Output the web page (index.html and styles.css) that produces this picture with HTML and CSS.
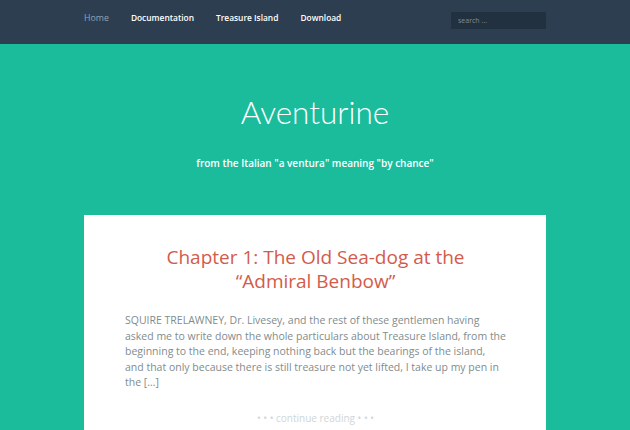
FILE: index.html
```html
<!DOCTYPE html>
<html>
<head>
<meta charset="utf-8">
<link rel="stylesheet" href="styles.css">
</head>
<body>
<header class="topbar">
  <div class="wrap topbar-inner">
    <nav class="menu">
      <a class="menu-item current" href="#">Home</a>
      <a class="menu-item" href="#">Documentation</a>
      <a class="menu-item" href="#">Treasure Island</a>
      <a class="menu-item" href="#">Download</a>
    </nav>
    <div class="search">search …</div>
  </div>
</header>
<section class="masthead">
  <h1 class="site-title">Aventurine</h1>
  <p class="site-desc">from the Italian "a ventura" meaning "by chance"</p>
</section>
<main class="wrap">
  <article class="card">
    <h2 class="post-title">Chapter 1: The Old Sea-dog at the<br>“Admiral Benbow”</h2>
    <p class="excerpt">SQUIRE TRELAWNEY, Dr. Livesey, and the rest of these gentlemen having asked me to write down the whole particulars about Treasure Island, from the beginning to the end, keeping nothing back but the bearings of the island,<br>and that only because there is still treasure not yet lifted, I take up my pen in<br>the […]</p>
    <p class="more">• • • continue reading • • •</p>
  </article>
</main>
</body>
</html>
```
FILE: styles.css
```css
html, body {
  margin: 0;
  padding: 0;
}
body {
  background: #1abc9c;
  font-family: "Open Sans", "Liberation Sans", sans-serif;
  overflow: hidden;
}
.wrap {
  width: 462px;
  margin: 0 auto;
}
.topbar {
  background: #2c3e50;
  height: 44px;
}
.topbar-inner {
  display: flex;
  justify-content: space-between;
  align-items: flex-start;
}
.menu {
  display: flex;
  gap: 22px;
  padding-top: 12px;
}
.menu-item {
  color: #ffffff;
  text-decoration: none;
  font-size: 8.4px;
  font-weight: 600;
  line-height: 12px;
}
.menu-item.current {
  color: #93a3b8;
  font-weight: 400;
  font-size: 8.8px;
}
.search {
  margin-top: 12px;
  width: 88px;
  height: 17px;
  padding-left: 7px;
  background: #223140;
  color: #7f8c99;
  font-size: 7px;
  line-height: 17px;
}
.masthead {
  text-align: center;
  color: #ffffff;
  padding-top: 48px;
  height: 171px;
  box-sizing: border-box;
}
.site-title {
  margin: 0;
  font-family: "Lato", sans-serif;
  font-weight: 300;
  font-size: 31.5px;
  line-height: 40px;
}
.site-desc {
  margin: 24px 0 0;
  font-size: 10px;
  line-height: 14px;
  font-weight: 600;
}
.card {
  background: #ffffff;
  padding: 30px 40px 10px 41px;
  text-align: center;
}
.post-title {
  margin: 0;
  color: #d35b4b;
  font-weight: 400;
  font-size: 19px;
  line-height: 24px;
}
.excerpt {
  margin: 20px 0 0;
  text-align: left;
  color: #7f8c8d;
  font-size: 10.5px;
  line-height: 15.6px;
}
.more {
  margin: 20px 0 0;
  color: #cfd6d8;
  font-size: 10px;
  line-height: 14px;
}
```
